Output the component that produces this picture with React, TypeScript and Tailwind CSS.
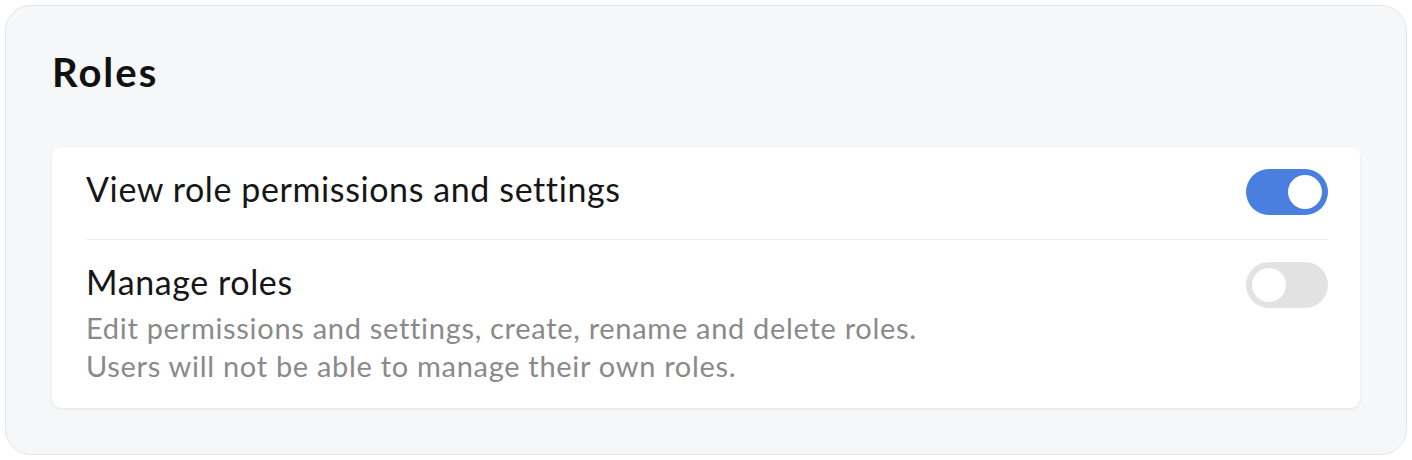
import React from 'react';

const Toggle: React.FC<{ on: boolean }> = ({ on }) => (
  <div
    className={`flex h-[46px] w-[82px] shrink-0 items-center rounded-full px-[6px] ${
      on ? 'justify-end bg-[#4a7fe0]' : 'justify-start bg-[#e2e2e2]'
    }`}
  >
    <div className="h-[34px] w-[34px] rounded-full bg-white" />
  </div>
);

function App() {
  return (
    <div className="min-h-screen bg-white p-[5px] font-['Lato',sans-serif]">
      <div className="h-[450px] rounded-[26px] border border-[#e4e5e7] bg-[#f6f7f9] px-[46px]">
        <h2 className="pt-[38px] text-[40px] font-bold leading-[56px] tracking-[2px] text-[#111]">Roles</h2>

        <div className="mt-[47px] rounded-[9px] bg-white pl-[34px] pr-[32px] shadow-[0_1px_3px_rgba(0,0,0,0.08)]">
          {/* first permission */}
          <div className="flex items-center justify-between pt-[22px] pb-[24px]">
            <span className="pb-[6px] text-[34px] leading-[40px] tracking-[0.6px] text-[#161616]">
              View role permissions and settings
            </span>
            <Toggle on />
          </div>

          <div className="h-px bg-[#ececec]" />

          {/* second permission */}
          <div className="flex justify-between pt-[22px] pb-[23px]">
            <div className="flex flex-col">
              <span className="text-[34px] leading-[40px] tracking-[0.6px] text-[#161616]">Manage roles</span>
              <p className="mt-[7px] text-[29px] leading-[38px] tracking-[0.7px] text-[#8a8a8a]">
                Edit permissions and settings, create, rename and delete roles.
                <br />
                Users will not be able to manage their own roles.
              </p>
            </div>
            <Toggle on={false} />
          </div>
        </div>
      </div>
    </div>
  );
}

export default App;
